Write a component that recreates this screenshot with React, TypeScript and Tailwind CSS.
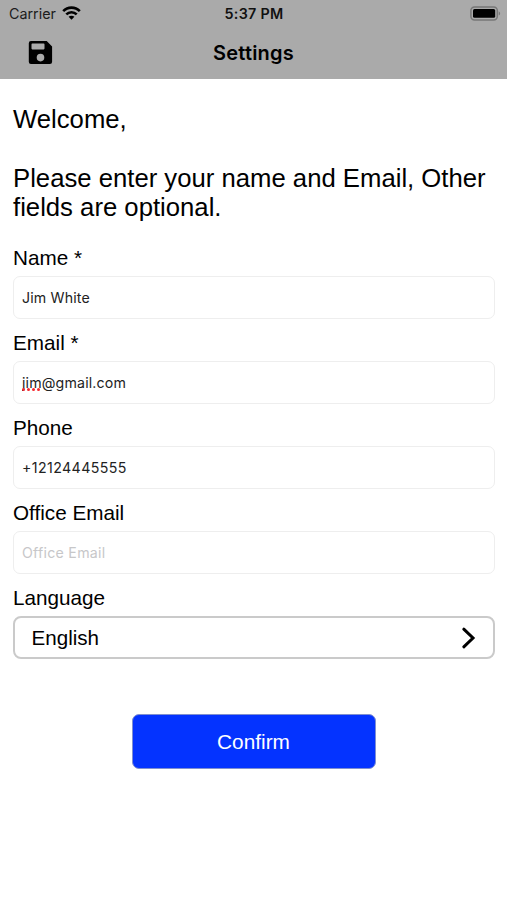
import { useState } from "react"

type Field = {
    name: string
    label: string
    placeholder: string
    value: string
    misspelled?: string
    numeric?: boolean
}

const initialFields: Field[] = [
    { name: "name", label: "Name *", placeholder: "Name", value: "Jim White" },
    { name: "email", label: "Email *", placeholder: "Email", value: "jim@gmail.com", misspelled: "jim" },
    { name: "phone", label: "Phone", placeholder: "Phone", value: "+12124445555", numeric: true },
    { name: "officeEmail", label: "Office Email", placeholder: "Office Email", value: "" },
]

export default function App() {
    const [fields, setfields] = useState(initialFields)

    function update(name: string, value: string) {
        setfields(old => old.map(f => f.name == name ? { ...f, value, misspelled: undefined } : f))
    }

    return (
        <div className="min-h-[900px] w-[507px] bg-white font-['Liberation_Sans',Arial,sans-serif] text-black">
            <Header />
            <form onSubmit={ev => ev.preventDefault()} className="px-[13px] pt-[25.5px]">
                <div className="text-[25.7px] leading-[29.5px] whitespace-nowrap">
                    <p>Welcome,</p>
                    <p className="mt-[29.5px]">Please enter your name and Email, Other<br />fields are optional.</p>
                </div>
                <div className="mt-[22.5px]">
                    {fields.map(f => (
                        <TextField key={f.name} field={f} onChange={v => update(f.name, v)} />
                    ))}
                    <div className="flex h-[31px] items-start text-[20.7px] leading-[26px]">Language</div>
                    <button
                        type="button"
                        className="flex h-[43px] w-[482px] items-center justify-between rounded-[8px] border-2 border-[#cacaca] pr-[17px] pl-[16.5px] text-[20.6px]">
                        <span className="pt-px">English</span>
                        <svg width="16" height="22" viewBox="0 0 16 22" fill="none" stroke="currentColor" strokeWidth="3">
                            <path d="M3.8 2.2L13 11L3.8 19.8" strokeLinecap="round" />
                        </svg>
                    </button>
                </div>
                <button
                    type="submit"
                    className="mx-auto mt-[55px] block h-[55px] w-[244px] rounded-[7px] border border-[#7f8fd0] bg-[#0433ff] text-[20.8px] text-white">
                    Confirm
                </button>
            </form>
        </div>
    )
}

function Header() {
    return (
        <header className="h-[79px] bg-[#aaaaaa] font-[Inter,sans-serif]">
            <div className="grid h-[27px] grid-cols-[1fr_auto_1fr] items-center pr-[6px] pl-[9px] text-[14.3px]">
                <div className="flex items-center gap-[6px]">
                    <span className="text-[#1c1c1c]">Carrier</span>
                    <WifiIcon />
                </div>
                <div className="pr-[2px] text-center font-semibold tracking-[0.3px] text-[#111]">5:37 PM</div>
                <div className="flex justify-end">
                    <BatteryIcon />
                </div>
            </div>
            <div className="grid h-[51px] grid-cols-3 items-center px-[28px]">
                <button type="button" className="w-fit" aria-label="Save">
                    <SaveIcon />
                </button>
                <h1 className="text-center text-[20px] font-semibold tracking-[0.2px]">Settings</h1>
            </div>
        </header>
    )
}

function TextField({ field, onChange }: {
    field: Field,
    onChange: (value: string) => void
}) {
    return (
        <label className="block h-[85.1px]">
            <span className="flex h-[31px] items-start text-[20.7px] leading-[26px]">{field.label}</span>
            <span className="relative block h-[43px]">
                <input
                    name={field.name}
                    value={field.value}
                    placeholder={field.placeholder}
                    onChange={ev => onChange(ev.target.value)}
                    spellCheck={false}
                    className={`h-[43px] w-[482px] rounded-[7px] border border-[#eeeeee] bg-white px-[8px] font-[Inter,sans-serif] text-[14.2px] text-[#222] outline-none placeholder:tracking-[0.25px] placeholder:text-[#c7c7c9] ${field.numeric ? "tracking-[0.4px]" : "tracking-[0.15px]"}`}
                />
                {/* spell checker dots */}
                {field.misspelled && (
                    <span className="absolute top-[27px] left-[9px] flex gap-[1.6px]">
                        {[0, 1, 2, 3].map(i => (
                            <i key={i} className="size-[3.3px] rounded-full bg-[#f5282d]" />
                        ))}
                    </span>
                )}
            </span>
        </label>
    )
}

function WifiIcon() {
    return (
        <svg width="19" height="15" viewBox="0 0 19 15" fill="none" stroke="black" strokeWidth="2.6">
            <path d="M1.2 5.1C5.8 0.4 13.2 0.4 17.8 5.1" />
            <path d="M4.3 8.4C7.2 5.5 11.8 5.5 14.7 8.4" />
            <path d="M9.5 13.7L6.6 10.8C8.2 9.3 10.8 9.3 12.4 10.8Z" fill="black" stroke="none" />
        </svg>
    )
}

function BatteryIcon() {
    return (
        <svg width="31" height="15" viewBox="0 0 31 15">
            <rect x="0.9" y="0.9" width="26.4" height="13" rx="3.6" fill="none" stroke="#777" strokeWidth="1.5" />
            <rect x="3" y="3" width="22.2" height="8.8" rx="1.5" fill="black" />
            <path d="M28.7 5.2C30.6 6 30.6 8.8 28.7 9.6Z" fill="#777" />
        </svg>
    )
}

function SaveIcon() {
    return (
        <svg width="25" height="25" viewBox="0 0 25 25">
            <path
                fillRule="evenodd"
                d="M3 1H18.7L24.1 6.4V21.8A2.2 2.2 0 0 1 21.9 24H3A2.2 2.2 0 0 1 0.8 21.8V3.2A2.2 2.2 0 0 1 3 1ZM4.3 3.6A0.8 0.8 0 0 0 3.5 4.4V8.6A0.8 0.8 0 0 0 4.3 9.4H15.7A0.8 0.8 0 0 0 16.5 8.6V4.4A0.8 0.8 0 0 0 15.7 3.6ZM12.5 13.8A3.8 3.8 0 1 0 12.5 21.4A3.8 3.8 0 1 0 12.5 13.8Z"
            />
        </svg>
    )
}
